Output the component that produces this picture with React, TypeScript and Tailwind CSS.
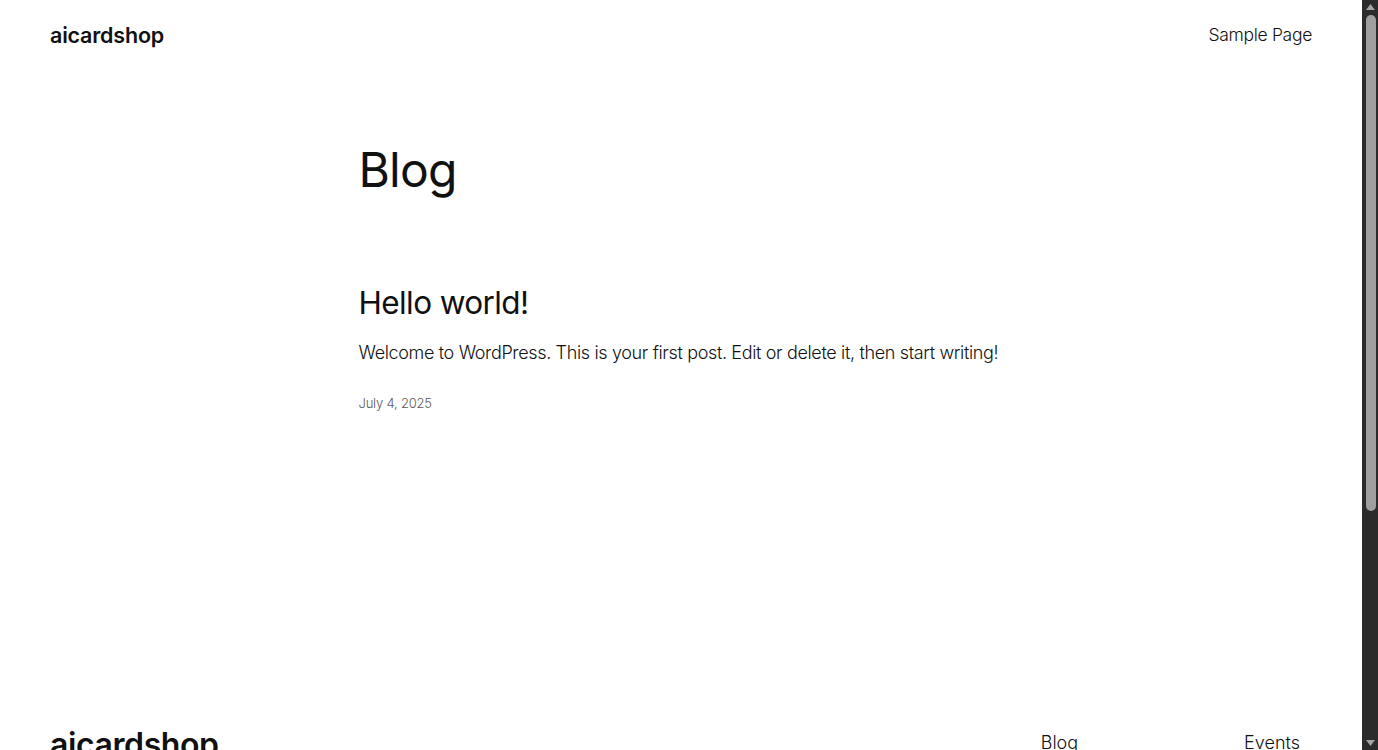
function Scrollbar() {
  return (
    <div className="w-[16px] h-[750px] shrink-0 bg-[#2b2b2b] flex flex-col items-center">
      <svg width="9" height="6" viewBox="0 0 9 6" className="mt-[4px] ml-[1px]">
        <path d="M4.5 0 L9 6 L0 6 Z" fill="#a3a3a3" />
      </svg>
      <div className="mt-[5px] ml-[1px] w-[10px] h-[496px] rounded-full bg-[#9f9f9f]" />
      <div className="flex-1" />
      <svg width="9" height="6" viewBox="0 0 9 6" className="mb-[4px] ml-[1px]">
        <path d="M0 0 L9 0 L4.5 6 Z" fill="#a3a3a3" />
      </svg>
    </div>
  );
}

export default function App() {
  return (
    <div className="h-[750px] flex bg-white overflow-hidden text-[#111111]" style={{ fontFamily: "Inter, 'Noto Sans', sans-serif" }}>
      <div className="flex-1 min-w-0 h-[750px] overflow-hidden">
        <header className="h-[70px] px-[50px] flex items-center justify-between">
          <a className="text-[21.5px] font-semibold tracking-[-0.2px] text-[#111]">aicardshop</a>
          <nav className="text-[17.5px] font-light tracking-[-0.3px] text-[#111]">Sample Page</nav>
        </header>
        <main className="w-[645px] mx-auto">
          <h1 className="mt-[71px] text-[48px] leading-[1.2] font-normal tracking-[-0.8px]">Blog</h1>
          <article className="mt-[85px]">
            <h2 className="text-[31.5px] leading-[1.2] font-normal tracking-[-0.6px]">Hello world!</h2>
            <p className="mt-[19px] text-[18px] leading-[1.4] font-light tracking-[-0.35px]">
              Welcome to WordPress. This is your first post. Edit or delete it, then start writing!
            </p>
            <p className="mt-[28px] text-[13px] leading-[1.4] font-light text-[#5a5a5a] tracking-[-0.2px]">July 4, 2025</p>
          </article>
        </main>
        <footer className="mt-[314px] px-[50px] flex justify-between items-start">
          <div className="text-[32px] leading-[1.2] font-semibold tracking-[-0.4px]">aicardshop</div>
          <div className="flex gap-[166px] pr-[12px] pt-[3px] text-[18px] font-light">
            <span>Blog</span>
            <span>Events</span>
          </div>
        </footer>
      </div>
      <Scrollbar />
    </div>
  );
}
